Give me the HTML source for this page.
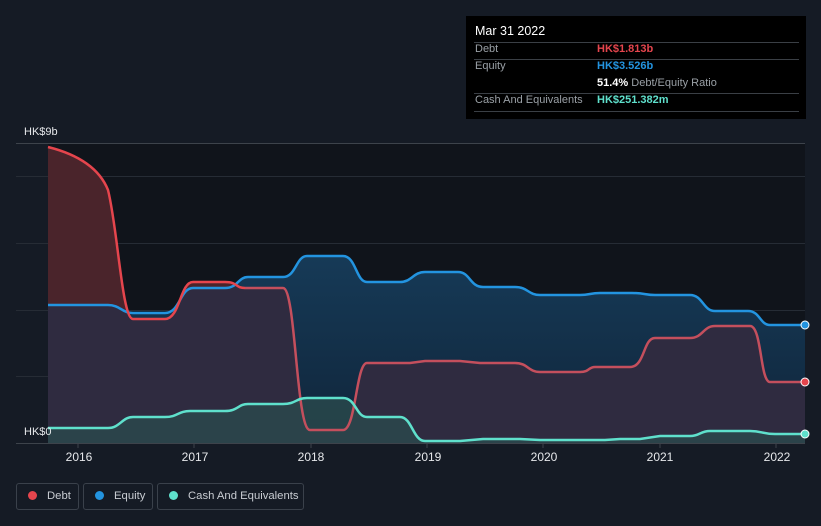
<!DOCTYPE html>
<html><head><style>
html,body{margin:0;padding:0;background:#151b25;width:821px;height:526px;overflow:hidden;font-family:"Liberation Sans",sans-serif;}
.tt{position:absolute;left:466px;top:16px;width:340px;height:103px;background:#000;}
.tt div{position:absolute;font-size:11px;color:#9aa0a6;white-space:nowrap;}
.tt .ln{position:absolute;left:8px;width:325px;height:1px;background:#3a3f45;}
.leg{position:absolute;top:483px;height:27px;border:1px solid #3a414b;border-radius:3px;color:#c8ccd2;font-size:11.3px;line-height:25px;box-sizing:border-box;white-space:nowrap;}
.leg span{display:inline-block;width:9px;height:9px;border-radius:50%;margin:0 10px 0 11px;vertical-align:-1px;}
</style></head><body>
<svg width="821" height="526" style="position:absolute;left:0;top:0">
<defs>
<linearGradient id="eq" x1="0" y1="0" x2="0" y2="1"><stop offset="0" stop-color="#163a57"/><stop offset="1" stop-color="#10253a"/></linearGradient>
<clipPath id="above"><path d="M48,143 L48,305 L108,305 C120,305 122,313 133,313 L165,313 C180,313 180,288 193,288 L225,288 C238,288 238,277 248,277 L283,277 C296,277 296,256 307,256 L343,256 C356,256 356,282 367,282 L400,282 C412,282 413,272 425,272 L458,272 C470,272 470,287 483,287 L515,287 C528,287 528,295 540,295 L580,295 C590,295 590,293 600,293 L632,293 C645,293 645,295 655,295 L690,295 C703,295 703,311 715,311 L748,311 C760,311 760,325 770,325 L805,325 L805,143Z"/></clipPath>
</defs>
<rect x="48" y="143" width="757" height="300" fill="#10141b"/>
<g stroke="#262c35" stroke-width="1">
<line x1="16" y1="176.5" x2="805" y2="176.5"/><line x1="16" y1="243.5" x2="805" y2="243.5"/><line x1="16" y1="310.5" x2="805" y2="310.5"/><line x1="16" y1="376.5" x2="805" y2="376.5"/>
</g>
<line x1="16" y1="143.5" x2="805" y2="143.5" stroke="#3d434b"/>
<path d="M48,305 L108,305 C120,305 122,313 133,313 L165,313 C180,313 180,288 193,288 L225,288 C238,288 238,277 248,277 L283,277 C296,277 296,256 307,256 L343,256 C356,256 356,282 367,282 L400,282 C412,282 413,272 425,272 L458,272 C470,272 470,287 483,287 L515,287 C528,287 528,295 540,295 L580,295 C590,295 590,293 600,293 L632,293 C645,293 645,295 655,295 L690,295 C703,295 703,311 715,311 L748,311 C760,311 760,325 770,325 L805,325 L805,443 L48,443Z" fill="url(#eq)"/>
<path d="M48,147 C80,155 100,170 108,190 C118,230 122,319 133,319 L165,319 C180,319 180,282 193,282 L225,282 C238,282 235,288 245,288 L283,288 C296,288 296,430 310,430 L343,430 C356,430 356,363 367,363 L410,363 L425,361 L460,361 L480,363 L515,363 C528,363 528,372 540,372 L580,372 C590,372 588,367 595,367 L630,367 C645,367 643,338 655,338 L690,338 C703,338 703,326 715,326 L750,326 C762,326 760,382 770,382 L805,382 L805,443 L48,443Z" fill="#2f2b40"/>
<path d="M48,147 C80,155 100,170 108,190 C118,230 122,319 133,319 L165,319 C180,319 180,282 193,282 L225,282 C238,282 235,288 245,288 L283,288 C296,288 296,430 310,430 L343,430 C356,430 356,363 367,363 L805,363 L805,443 L48,443Z" fill="#4a242b" clip-path="url(#above)"/>
<path d="M48,428 L108,428 C120,428 122,417 133,417 L165,417 C178,417 178,411 190,411 L225,411 C238,411 238,404 248,404 L283,404 C296,404 296,398 307,398 L343,398 C356,398 356,417 367,417 L400,417 C412,417 413,441 425,441 L460,441 L483,439 L520,439 L540,440 L605,440 L620,439 L640,439 L660,436 L690,436 C700,436 700,431 710,431 L750,431 C762,431 762,434 775,434 L805,434 L805,443 L48,443Z" fill="#2a4a4c" fill-opacity="0.8"/>
<path d="M48,305 L108,305 C120,305 122,313 133,313 L165,313 C180,313 180,288 193,288 L225,288 C238,288 238,277 248,277 L283,277 C296,277 296,256 307,256 L343,256 C356,256 356,282 367,282 L400,282 C412,282 413,272 425,272 L458,272 C470,272 470,287 483,287 L515,287 C528,287 528,295 540,295 L580,295 C590,295 590,293 600,293 L632,293 C645,293 645,295 655,295 L690,295 C703,295 703,311 715,311 L748,311 C760,311 760,325 770,325 L805,325" fill="none" stroke="#2394e0" stroke-width="2.5"/>
<path d="M48,147 C80,155 100,170 108,190 C118,230 122,319 133,319 L165,319 C180,319 180,282 193,282 L225,282 C238,282 235,288 245,288" fill="none" stroke="#e5454d" stroke-width="2.5"/>
<path d="M245,288 L283,288 C296,288 296,430 310,430 L343,430 C356,430 356,363 367,363 L410,363 L425,361 L460,361 L480,363 L515,363 C528,363 528,372 540,372 L580,372 C590,372 588,367 595,367 L630,367 C645,367 643,338 655,338 L690,338 C703,338 703,326 715,326 L750,326 C762,326 760,382 770,382 L805,382" fill="none" stroke="#c44f5d" stroke-width="2.5"/>
<path d="M48,428 L108,428 C120,428 122,417 133,417 L165,417 C178,417 178,411 190,411 L225,411 C238,411 238,404 248,404 L283,404 C296,404 296,398 307,398 L343,398 C356,398 356,417 367,417 L400,417 C412,417 413,441 425,441 L460,441 L483,439 L520,439 L540,440 L605,440 L620,439 L640,439 L660,436 L690,436 C700,436 700,431 710,431 L750,431 C762,431 762,434 775,434 L805,434" fill="none" stroke="#5fe0cc" stroke-width="2.5"/>
<line x1="16" y1="443.5" x2="805" y2="443.5" stroke="#3d434b"/>
<g stroke="#3d434b"><line x1="78" y1="443" x2="78" y2="448"/><line x1="194" y1="443" x2="194" y2="448"/><line x1="311" y1="443" x2="311" y2="448"/><line x1="427" y1="443" x2="427" y2="448"/><line x1="543" y1="443" x2="543" y2="448"/><line x1="660" y1="443" x2="660" y2="448"/><line x1="776" y1="443" x2="776" y2="448"/></g>
<circle cx="805" cy="325" r="4" fill="#2394e0" stroke="#fff" stroke-width="1"/>
<circle cx="805" cy="382" r="4" fill="#e5454d" stroke="#fff" stroke-width="1"/>
<circle cx="805" cy="434" r="4" fill="#5fe0cc" stroke="#fff" stroke-width="1"/>
<g fill="#e6e8eb" font-size="12" font-family="Liberation Sans, sans-serif" text-anchor="middle">
<text x="79" y="461">2016</text><text x="195" y="461">2017</text><text x="311" y="461">2018</text><text x="428" y="461">2019</text><text x="544" y="461">2020</text><text x="660" y="461">2021</text><text x="777" y="461">2022</text>
</g>
<g fill="#e6e8eb" font-size="11" font-family="Liberation Sans, sans-serif">
<text x="24" y="135">HK$9b</text><text x="24" y="435">HK$0</text>
</g>
</svg>
<div class="tt">
<div style="left:9px;top:8px;color:#fff;font-size:12.5px">Mar 31 2022</div>
<div class="ln" style="top:26px"></div>
<div style="left:9px;top:27px">Debt</div><div style="left:131px;top:27px;color:#e5454d;font-weight:bold">HK$1.813b</div>
<div class="ln" style="top:43px"></div>
<div style="left:9px;top:44px">Equity</div><div style="left:131px;top:44px;color:#2394e0;font-weight:bold">HK$3.526b</div>
<div style="left:131px;top:61px"><b style="color:#fff">51.4%</b> Debt/Equity Ratio</div>
<div class="ln" style="top:77px"></div>
<div style="left:9px;top:78px">Cash And Equivalents</div><div style="left:131px;top:78px;color:#5fe0cc;font-weight:bold">HK$251.382m</div>
<div class="ln" style="top:95px"></div>
</div>
<div class="leg" style="left:16px;width:63px"><span style="background:#e5454d"></span>Debt</div>
<div class="leg" style="left:83px;width:70px"><span style="background:#2394e0"></span>Equity</div>
<div class="leg" style="left:157px;width:147px"><span style="background:#5fe0cc"></span>Cash And Equivalents</div>
</body></html>
